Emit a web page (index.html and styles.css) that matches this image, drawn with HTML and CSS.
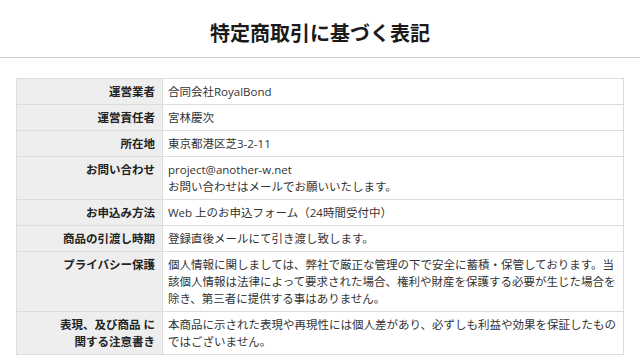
FILE: index.html
```html
<!DOCTYPE html>
<html lang="ja">
<head>
<meta charset="utf-8">
<title>特定商取引に基づく表記</title>
<link rel="stylesheet" href="styles.css">
</head>
<body>
<header class="page-header">
  <h1 class="page-title">特定商取引に基づく表記</h1>
</header>
<main class="content">
  <table class="law-table">
    <tbody>
      <tr><th>運営業者</th><td>合同会社RoyalBond</td></tr>
      <tr><th>運営責任者</th><td>宮林慶次</td></tr>
      <tr><th>所在地</th><td>東京都港区芝3-2-11</td></tr>
      <tr><th>お問い合わせ</th><td>project@another-w.net<br>お問い合わせはメールでお願いいたします。</td></tr>
      <tr><th>お申込み方法</th><td>Web 上のお申込フォーム（24時間受付中）</td></tr>
      <tr><th>商品の引渡し時期</th><td>登録直後メールにて引き渡し致します。</td></tr>
      <tr><th>プライバシー保護</th><td>個人情報に関しましては、弊社で厳正な管理の下で安全に蓄積・保管しております。当該個人情報は法律によって要求された場合、権利や財産を保護する必要が生じた場合を除き、第三者に提供する事はありません。</td></tr>
      <tr><th>表現、及び商品 に<br>関する注意書き</th><td>本商品に示された表現や再現性には個人差があり、必ずしも利益や効果を保証したものではございません。</td></tr>
    </tbody>
  </table>
</main>
</body>
</html>
```
FILE: styles.css
```css
html, body {
  margin: 0;
  padding: 0;
  background: #fff;
}
body {
  font-family: "Open Sans", "Noto Sans CJK JP", sans-serif;
  color: #333;
}
.page-header {
  border-bottom: 1px solid #c8c8c8;
  padding: 18px 0 9px;
}
.page-title {
  margin: 0;
  font-size: 20px;
  line-height: 30px;
  font-weight: bold;
  color: #1a1a1a;
  text-align: center;
  font-family: "Noto Sans CJK JP", sans-serif;
}
.content {
  padding: 20px 16px;
}
.law-table {
  width: 100%;
  border-collapse: collapse;
  border: 1px solid #dcdcdc;
  font-size: 11.5px;
  line-height: 17px;
}
.law-table th,
.law-table td {
  border: 1px solid #dcdcdc;
  vertical-align: top;
}
.law-table th {
  width: 134px;
  background: #eeeeee;
  text-align: right;
  font-weight: bold;
  color: #222;
  padding: 4px 7px 4px 4px;
  white-space: nowrap;
}
.law-table td {
  padding: 4px 5px;
  background: #fff;
  color: #333;
}
```
